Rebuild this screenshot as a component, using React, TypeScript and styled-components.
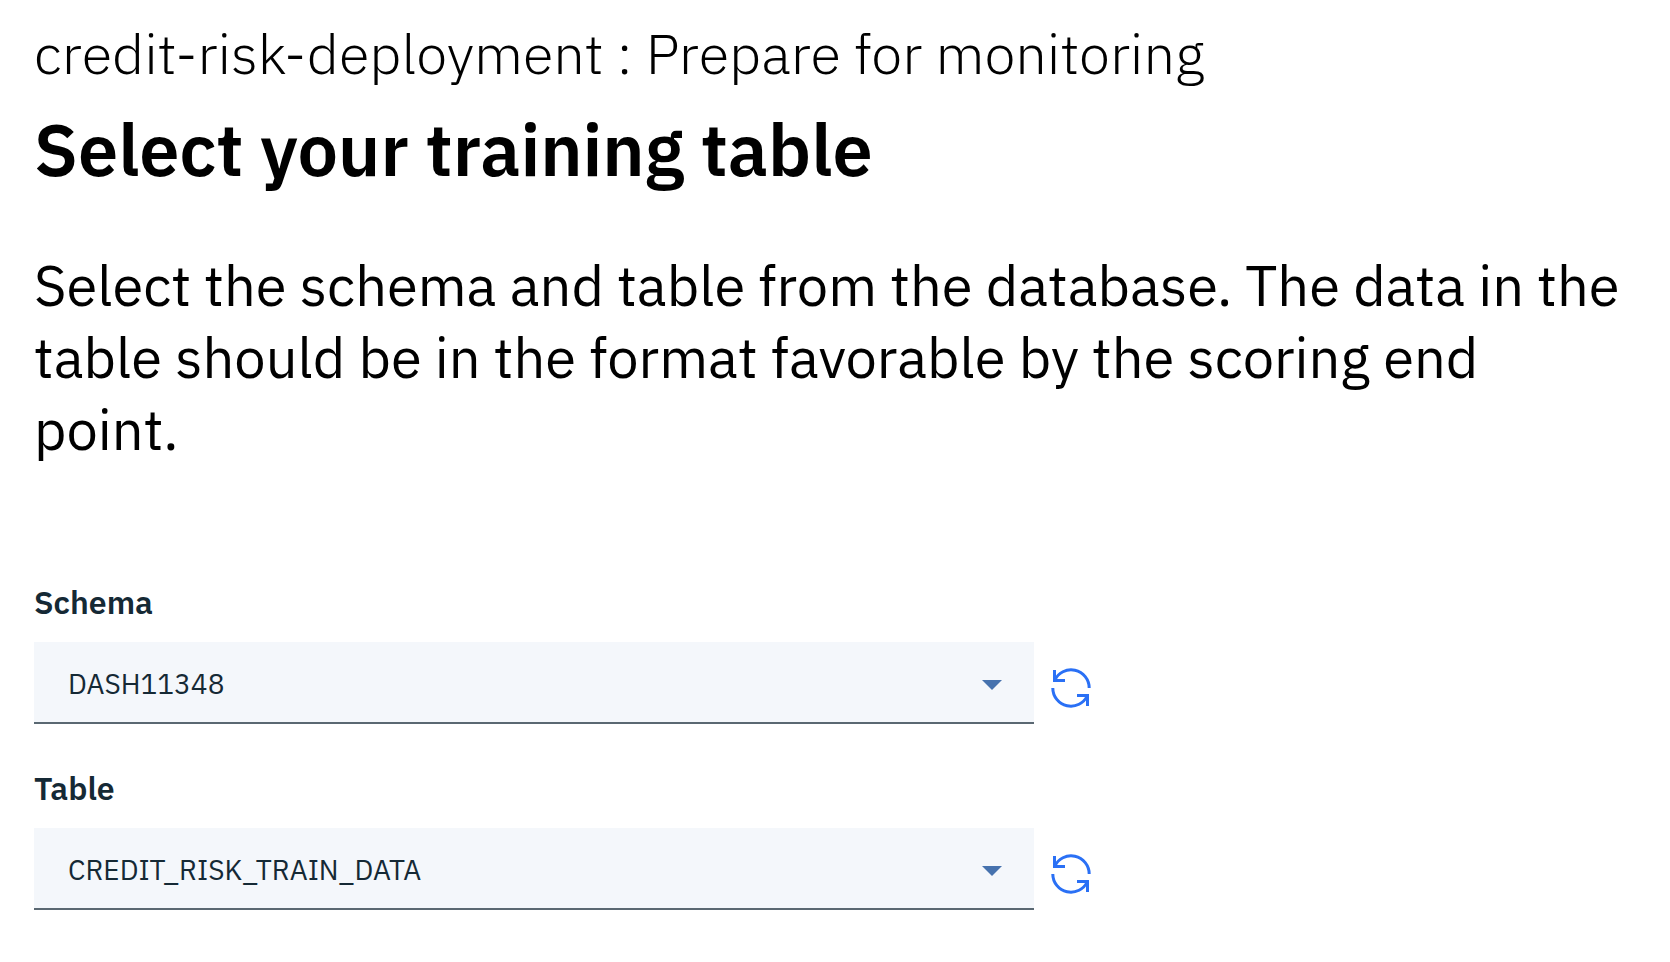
import React from "react";
import styled, { createGlobalStyle } from "styled-components";

const GlobalStyle = createGlobalStyle`
  * { box-sizing: border-box; }
  body {
    margin: 0;
    background: #ffffff;
    color: #000000;
    font-family: "IBM Plex Sans", "Open Sans", sans-serif;
  }
`;

const Page = styled.main`
  display: flex;
  flex-direction: column;
  padding: 17px 34px 0;
  min-height: 962px;
`;

const Context = styled.p`
  margin: 0;
  font-size: 56px;
  font-weight: 300;
  line-height: 72px;
  white-space: nowrap;
`;

const Heading = styled.h1`
  margin: 15px 0 0;
  font-size: 72px;
  font-weight: 600;
  line-height: 90px;
  white-space: nowrap;
`;

const Description = styled.p`
  margin: 55px 0 0;
  font-size: 56px;
  line-height: 72px;
`;

const Line = styled.span`
  display: block;
  white-space: nowrap;
`;

const Form = styled.form`
  display: flex;
  flex-direction: column;
  gap: 44px;
  margin-top: 117px;
`;

const Field = styled.div`
  display: flex;
  flex-direction: column;
  gap: 20px;
`;

const Label = styled.label`
  color: #152935;
  font-size: 32px;
  font-weight: 600;
  line-height: 40px;
`;

const Controls = styled.div`
  display: flex;
  align-items: center;
  gap: 16px;
`;

const Select = styled.div`
  display: flex;
  align-items: center;
  justify-content: space-between;
  width: 1000px;
  height: 82px;
  padding: 4px 32px 0 34px;
  background: #f4f7fb;
  border-bottom: 2px solid #5a6872;
  color: #152935;
`;

const Value = styled.span`
  font-size: 28px;
  line-height: 40px;
`;

const Caret = styled.svg`
  display: block;
  width: 20px;
  height: 10px;
  margin-top: 2px;
  fill: #4672ae;
`;

const RefreshButton = styled.button`
  display: flex;
  margin: 10px 0 0;
  padding: 0;
  border: 0;
  background: none;
  color: #2a70f5;
`;

const RefreshIcon = () => (
  <svg width="42" height="42" viewBox="0 0 42 42" fill="none" stroke="currentColor" strokeWidth="3">
    <path d="M39.2 21A18.1 18.1 0 0 0 4.6 13.5" />
    <path d="M4.5 3V13.5H15" />
    <path d="M2.8 21A18.1 18.1 0 0 0 37.4 28.5" />
    <path d="M37.5 39V28.5H27" />
  </svg>
);

const fields = [
  { label: "Schema", value: "DASH11348" },
  { label: "Table", value: "CREDIT_RISK_TRAIN_DATA" },
];

export default function App() {
  return (
    <>
      <GlobalStyle />
      <Page>
        <Context>credit-risk-deployment : Prepare for monitoring</Context>
        <Heading>Select your training table</Heading>
        <Description>
          <Line>Select the schema and table from the database. The data in the</Line>
          <Line>table should be in the format favorable by the scoring end</Line>
          <Line>point.</Line>
        </Description>
        <Form>
          {fields.map((f) => (
            <Field key={f.label}>
              <Label>{f.label}</Label>
              <Controls>
                <Select>
                  <Value>{f.value}</Value>
                  <Caret viewBox="0 0 20 10">
                    <path d="M0 0H20L10 10Z" />
                  </Caret>
                </Select>
                <RefreshButton type="button" aria-label={`Refresh ${f.label}`}>
                  <RefreshIcon />
                </RefreshButton>
              </Controls>
            </Field>
          ))}
        </Form>
      </Page>
    </>
  );
}
